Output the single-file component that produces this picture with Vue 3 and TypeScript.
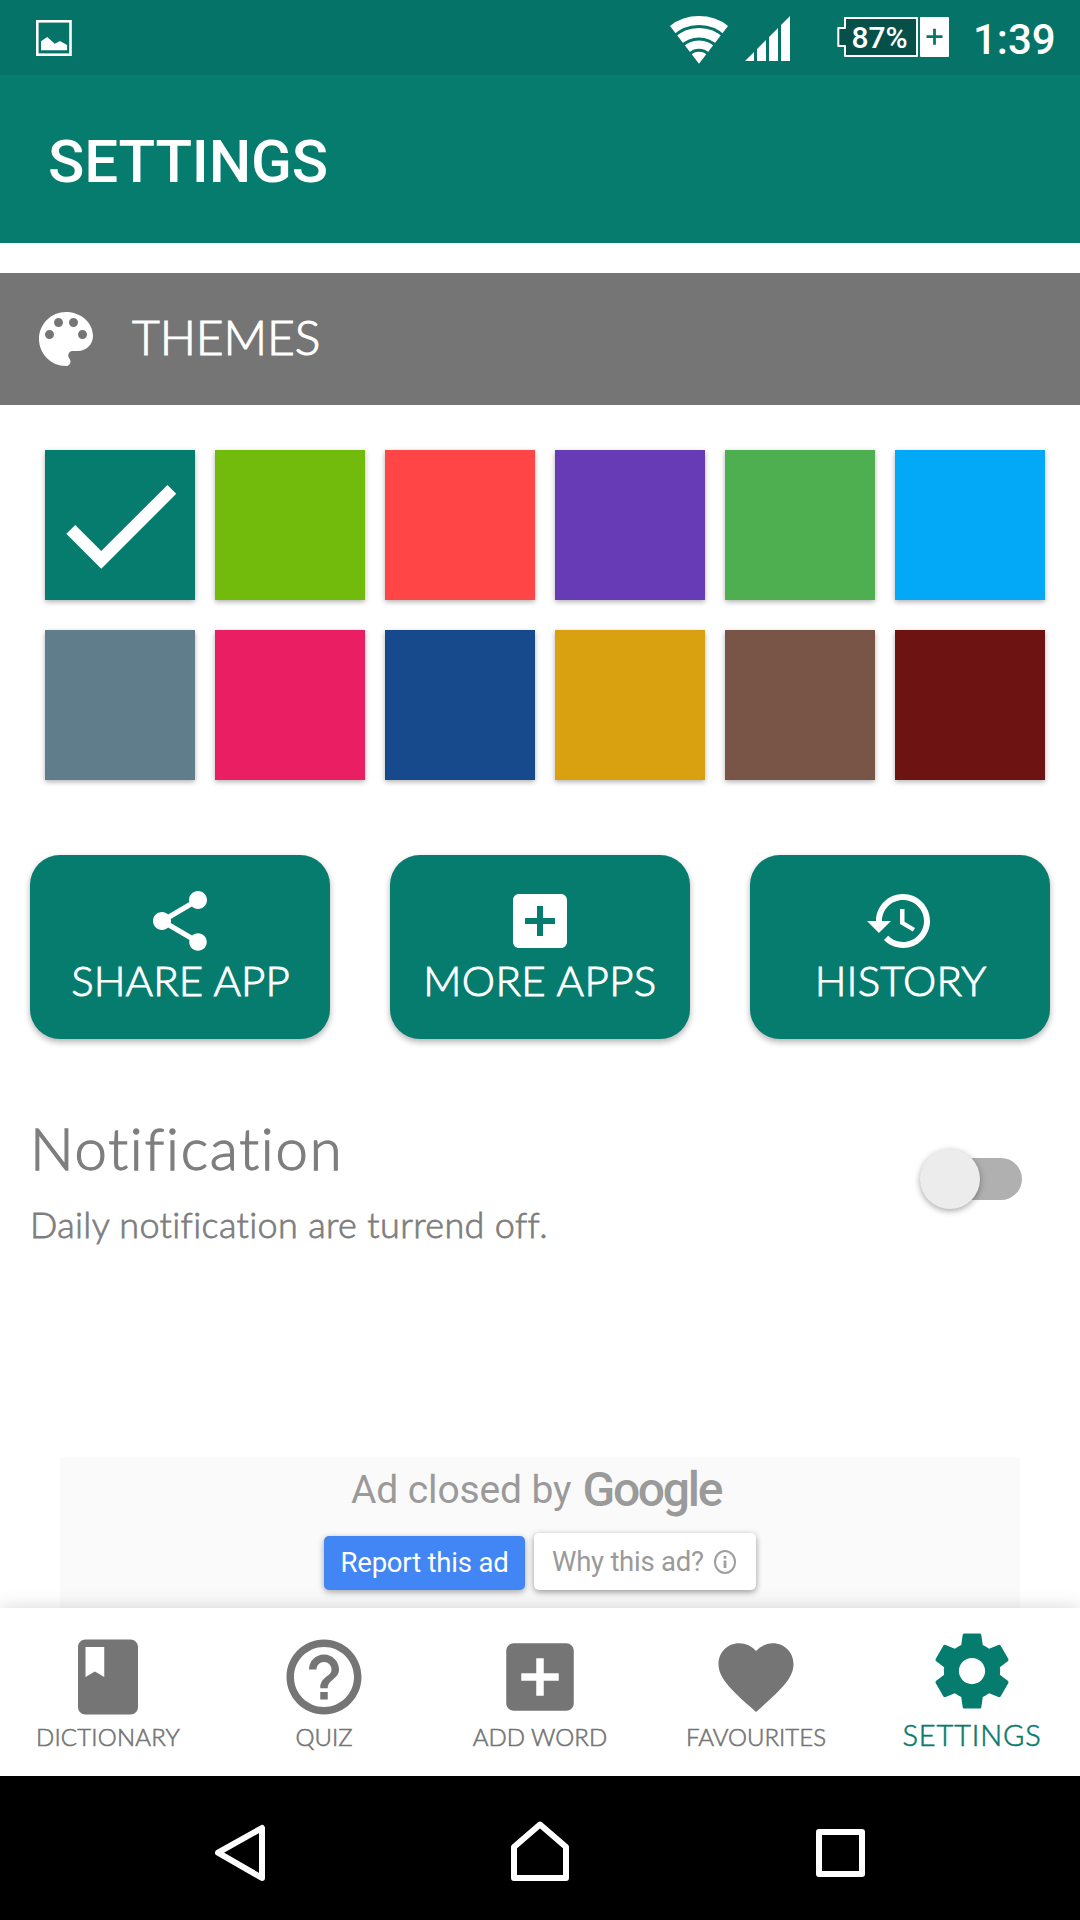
<script setup lang="ts">
import { ref } from 'vue'

interface Action { label: string; icon: string; cls: string }
interface Tab { label: string; icon: string; active?: boolean; cls: string }

const themes: string[] = [
  '#067c6f', '#72bb0c', '#ff4545', '#673bb5', '#4daf50', '#03a9f7',
  '#607d8b', '#ea1e63', '#174a8c', '#d9a010', '#795548', '#6d1412',
]
const selected = ref(0)
const notify = ref(false)

const plusBox = 'M19 3H5c-1.11 0-2 .9-2 2v14c0 1.1.89 2 2 2h14c1.1 0 2-.9 2-2V5c0-1.1-.9-2-2-2zm-2 10h-4v4h-2v-4H7v-2h4V7h2v4h4v2z'

const actions: Action[] = [
  { label: 'SHARE APP', cls: 'a-share', icon: 'M18 16.08c-.76 0-1.44.3-1.96.77L8.91 12.7c.05-.23.09-.46.09-.7s-.04-.47-.09-.7l7.05-4.11c.54.5 1.25.81 2.04.81 1.66 0 3-1.34 3-3s-1.34-3-3-3-3 1.34-3 3c0 .24.04.47.09.7L8.04 9.81C7.5 9.31 6.79 9 6 9c-1.66 0-3 1.34-3 3s1.34 3 3 3c.79 0 1.5-.31 2.04-.81l7.12 4.16c-.05.21-.08.43-.08.65 0 1.61 1.31 2.92 2.92 2.92s2.92-1.31 2.92-2.92-1.31-2.92-2.92-2.92z' },
  { label: 'MORE APPS', cls: 'a-more', icon: plusBox },
  { label: 'HISTORY', cls: 'a-history', icon: 'M13 3c-4.97 0-9 4.03-9 9H1l3.89 3.89.07.14L9 12H6c0-3.87 3.13-7 7-7s7 3.13 7 7-3.13 7-7 7c-1.93 0-3.68-.79-4.94-2.06l-1.42 1.42C8.27 19.99 10.51 21 13 21c4.97 0 9-4.03 9-9s-4.03-9-9-9zm-1 5v5l4.28 2.54.72-1.21-3.5-2.08V8H12z' },
]

const tabs: Tab[] = [
  { label: 'DICTIONARY', cls: 't-dictionary', icon: 'M18 2H6c-1.1 0-2 .9-2 2v16c0 1.1.9 2 2 2h12c1.1 0 2-.9 2-2V4c0-1.1-.9-2-2-2zM6 4h5v8l-2.5-1.5L6 12V4z' },
  { label: 'QUIZ', cls: 't-quiz', icon: 'M11 18h2v-2h-2v2zm1-16C6.48 2 2 6.48 2 12s4.48 10 10 10 10-4.48 10-10S17.52 2 12 2zm0 18c-4.41 0-8-3.59-8-8s3.59-8 8-8 8 3.59 8 8-3.59 8-8 8zm0-14c-2.21 0-4 1.79-4 4h2c0-1.1.9-2 2-2s2 .9 2 2c0 2-3 1.75-3 5h2c0-2.25 3-2.5 3-5 0-2.21-1.79-4-4-4z' },
  { label: 'ADD WORD', cls: 't-add', icon: plusBox },
  { label: 'FAVOURITES', cls: 't-favourites', icon: 'M12 21.35l-1.45-1.32C5.4 15.36 2 12.28 2 8.5 2 5.42 4.42 3 7.5 3c1.74 0 3.41.81 4.5 2.09C13.09 3.81 14.76 3 16.5 3 19.58 3 22 5.42 22 8.5c0 3.78-3.4 6.86-8.55 11.54L12 21.35z' },
  { label: 'SETTINGS', cls: 't-settings', active: true, icon: 'M19.43 12.98c.04-.32.07-.64.07-.98s-.03-.66-.07-.98l2.11-1.65c.19-.15.24-.42.12-.64l-2-3.46c-.12-.22-.39-.3-.61-.22l-2.49 1c-.52-.4-1.08-.73-1.69-.98l-.38-2.65C14.46 2.18 14.25 2 14 2h-4c-.25 0-.46.18-.49.42l-.38 2.65c-.61.25-1.17.59-1.69.98l-2.49-1c-.23-.09-.49 0-.61.22l-2 3.46c-.13.22-.07.49.12.64l2.11 1.65c-.04.32-.07.65-.07.98s.03.66.07.98l-2.11 1.65c-.19.15-.24.42-.12.64l2 3.46c.12.22.39.3.61.22l2.49-1c.52.4 1.08.73 1.69.98l.38 2.65c.03.24.24.42.49.42h4c.25 0 .46-.18.49-.42l.38-2.65c.61-.25 1.17-.59 1.69-.98l2.49 1c.23.09.49 0 .61-.22l2-3.46c.12-.22.07-.49-.12-.64l-2.11-1.65zM12 15.5c-1.93 0-3.5-1.57-3.5-3.5s1.57-3.5 3.5-3.5 3.5 1.57 3.5 3.5-1.57 3.5-3.5 3.5z' },
]
</script>

<template>
  <div class="screen">
    <header class="status">
      <svg class="pic" width="36" height="36" viewBox="0 0 36 36">
        <rect x="1.3" y="1.3" width="33.2" height="33.4" fill="none" stroke="#fff" stroke-width="2.6" />
        <path d="M5 21.3 11.2 17l7.6 6.7 5.1-2.7 7.2 4v5.3H5z" fill="#fff" />
      </svg>
      <svg class="wifi" width="58" height="48" viewBox="0 0 58 48">
        <clipPath id="wedge"><path d="M29 47.7 0 10V0h58v10z" /></clipPath>
        <g clip-path="url(#wedge)" fill="none" stroke="#fff">
          <circle cx="29" cy="47.7" r="43.1" stroke-width="9" />
          <circle cx="29" cy="47.7" r="31" stroke-width="9.4" />
          <circle cx="29" cy="47.7" r="19.1" stroke-width="8.4" />
          <circle cx="29" cy="47.7" r="11.9" fill="#fff" stroke="none" />
        </g>
      </svg>
      <svg class="signal" width="45" height="45" viewBox="0 0 45 45">
        <path d="M0 45h9v-9zM12 45V33l9-9v21zM24 45V21l9-9v33zM36 45V9l9-9v45z" fill="#fff" />
      </svg>
      <svg class="battery" width="112" height="42" viewBox="0 0 112 42">
        <path d="M8 2h72v38H8V30H1.3V12H8z" fill="#07504a" stroke="#fff" stroke-width="2" stroke-linejoin="round" />
        <rect x="83" y="1" width="29" height="40" rx="1" fill="#fff" />
        <path d="M89.5 20.7h16M97.5 12.700v16" stroke="#06756a" stroke-width="2.8" />
        <text class="pct" x="14.500" y="31.700" fill="#fff">87%</text>
      </svg>
      <span class="time">1:39</span>
    </header>

    <div class="toolbar"><h1>SETTINGS</h1></div>

    <main class="content">
      <div class="themes-head">
        <svg width="72" height="72" viewBox="0 0 24 24" fill="#fff">
          <path d="M12 3c-4.97 0-9 4.03-9 9s4.03 9 9 9c.83 0 1.500-.67 1.500-1.500 0-.39-.15-.74-.39-1.010-.23-.26-.38-.61-.38-.99 0-.83.67-1.500 1.500-1.500H16c2.760 0 5-2.240 5-5 0-4.420-4.030-8-9-8zm-5.500 9c-.83 0-1.500-.67-1.500-1.500S5.670 9 6.500 9 8 9.670 8 10.500 7.330 12 6.500 12zm3-4C8.670 8 8 7.330 8 6.500S8.670 5 9.500 5s1.500.67 1.500 1.500S10.330 8 9.500 8zm5 0c-.83 0-1.500-.67-1.500-1.500S13.670 5 14.500 5s1.500.67 1.500 1.500S15.330 8 14.500 8zm3 4c-.83 0-1.500-.67-1.500-1.500S16.670 9 17.500 9s1.500.67 1.500 1.500-.67 1.500-1.500 1.500z" />
        </svg>
        <h2 class="thin">THEMES</h2>
      </div>

      <div class="swatches">
        <button v-for="(color, i) in themes" :key="color" class="swatch" :style="{ background: color }" @click="selected = i">
          <svg v-if="i === selected" width="150" height="150" viewBox="0 0 24 24" fill="#fff">
            <path d="M9 16.170 4.830 12l-1.420 1.410L9 19 21 7l-1.410-1.410z" />
          </svg>
        </button>
      </div>

      <div class="actions">
        <button v-for="a in actions" :key="a.label" class="action">
          <svg width="72" height="72" viewBox="0 0 24 24" fill="#fff"><path :d="a.icon" /></svg>
          <span class="thin" :class="a.cls">{{ a.label }}</span>
        </button>
      </div>

      <div class="notify">
        <div>
          <div class="thin n-title">Notification</div>
          <div class="thin n-sub">Daily notification are turrend off.</div>
        </div>
        <button class="switch" :class="{ on: notify }" @click="notify = !notify"><span class="thumb"></span></button>
      </div>

      <div class="ad">
        <div class="ad-title"><span class="ad-by">Ad closed by</span><span class="google">Google</span></div>
        <div class="ad-buttons">
          <button class="report">Report this ad</button>
          <button class="why">
            <span>Why this ad?</span>
            <svg width="24" height="26" viewBox="0 0 24 26">
              <ellipse cx="12" cy="13" rx="10" ry="11" fill="none" stroke="#9e9e9e" stroke-width="2" />
              <path d="M12 11.500v7.500M12 7v2.800" stroke="#9e9e9e" stroke-width="2.8" />
            </svg>
          </button>
        </div>
      </div>
    </main>

    <nav class="tabs">
      <button v-for="t in tabs" :key="t.label" class="tab" :class="{ active: t.active }">
        <svg width="90" height="90" viewBox="0 0 24 24" fill="currentColor"><path :d="t.icon" /></svg>
        <span class="thin" :class="t.cls">{{ t.label }}</span>
      </button>
    </nav>

    <footer class="sysnav">
      <svg width="60" height="60" viewBox="0 0 60 60"><path d="M8 30.700 52 6v50z" /></svg>
      <svg width="60" height="62" viewBox="0 0 60 62"><path d="M4 27 30 4.500 56 27v31H4z" /></svg>
      <svg width="50" height="50" viewBox="0 0 50 50"><rect x="4" y="4" width="43" height="42" /></svg>
    </footer>
  </div>
</template>

<style>
body { margin: 0; background: #fff; }
</style>

<style scoped>
.screen { width: 1080px; height: 1920px; display: flex; flex-direction: column; overflow: hidden; background: #fff; font-family: Lato, 'Open Sans', sans-serif; font-weight: 300; font-variant-ligatures: none; }
button { border: 0; padding: 0; margin: 0; background: none; font: inherit; color: inherit; white-space: nowrap; }
h1, h2 { margin: 0; font-weight: 300; }
svg { display: block; flex: none; }
span, h1, h2 { white-space: nowrap; }
.thin { -webkit-text-stroke: 0.022em currentColor; }

.status { height: 75px; flex: none; display: flex; align-items: flex-start; background: #067368; color: #fff; font-family: Roboto, sans-serif; }
.pic { margin: 20px 0 0 36px; }
.wifi { margin: 16px 0 0 598px; }
.signal { margin: 16px 0 0 17px; }
.battery { margin: 16px 0 0 47px; }
.pct { font: 500 30px Roboto, sans-serif; }
.time { margin: 15px 0 0 24px; font-size: 42px; line-height: 50px; font-weight: 500; }

.toolbar { height: 168px; flex: none; display: flex; align-items: center; box-sizing: border-box; padding: 6px 0 0 48px; background: #067c6f; color: #fff; }
h1 { font: 500 60px/70px Roboto, sans-serif; letter-spacing: -0.15px; }

.content { height: 1365px; flex: none; display: flex; flex-direction: column; box-sizing: border-box; padding-top: 30px; }
.themes-head { height: 132px; flex: none; display: flex; align-items: center; gap: 30px; padding-left: 30px; background: #757575; color: #fff; }
h2 { font-size: 48px; line-height: 58px; padding-bottom: 5px; letter-spacing: -0.1px; }

.swatches { display: grid; grid-template-columns: repeat(6, 150px); gap: 30px 20px; margin: 45px 0 0 45px; }
.swatch { height: 150px; box-shadow: 0 2px 5px rgba(0, 0, 0, .3); }

.actions { display: flex; gap: 60px; margin: 75px 0 0 30px; }
.action { width: 300px; height: 184px; border-radius: 30px; box-sizing: border-box; padding-top: 30px; display: flex; flex-direction: column; align-items: center; background: #067c6f; color: #fff; box-shadow: 0 3px 6px rgba(0, 0, 0, .3); font-size: 42px; line-height: 46px; }
.a-share { letter-spacing: 0.12px; padding-left: 1px; }
.a-more { letter-spacing: 0.4px; }
.a-history { letter-spacing: 0.15px; padding-left: 1px; }

.notify { display: flex; justify-content: space-between; margin: 77px 58px 0 30px; color: #7e7e7e; }
.n-title { font-size: 58px; line-height: 64px; letter-spacing: 1.75px; }
.n-sub { font-size: 36px; line-height: 44px; margin-top: 22px; letter-spacing: 0.35px; }
.switch { display: block; width: 84px; height: 42px; margin-top: 42px; border-radius: 21px; background: #b0b0b0; }
.thumb { display: block; width: 60px; height: 60px; margin: -9px 0 0 -18px; border-radius: 50%; background: #ececec; box-shadow: 0 2px 6px rgba(0, 0, 0, .35); }
.switch.on .thumb { margin-left: 42px; }

.ad { width: 960px; height: 151px; margin: auto auto 0; background: #fafafa; color: #9a9a9a; font-family: Roboto, sans-serif; font-weight: 400; }
.ad-title { display: flex; align-items: flex-start; height: 76px; padding-left: 291px; }
.ad-by { font-size: 39px; line-height: 66px; letter-spacing: -0.12px; }
.google { font: 500 48px/66px Roboto, sans-serif; letter-spacing: -2.25px; margin-left: 11px; }
.ad-buttons { display: flex; align-items: flex-end; gap: 9px; padding-left: 264px; font-size: 27.5px; }
.report { width: 201px; height: 54px; border-radius: 5px; padding-bottom: 2px; letter-spacing: -0.2px; background: #4285f4; color: #fff; box-shadow: 0 2px 6px rgba(0, 0, 0, .35); }
.why { width: 222px; height: 57px; border-radius: 5px; display: flex; align-items: center; gap: 9px; box-sizing: border-box; padding-left: 18px; letter-spacing: -0.25px; background: #fff; box-shadow: 0 2px 6px rgba(0, 0, 0, .4); }

.tabs { position: relative; height: 168px; flex: none; display: flex; background: #fff; color: #757575; box-shadow: 0 0 18px rgba(0, 0, 0, .16); }
.tab { width: 216px; box-sizing: border-box; padding-top: 24px; display: flex; flex-direction: column; align-items: center; font-size: 24px; line-height: 30px; }
.tab .thin { -webkit-text-stroke-width: 0.6px; }
.tab.active { padding-top: 18px; color: #067c6f; font-size: 29px; line-height: 38px; }
.t-dictionary { letter-spacing: 0.2px; }
.t-settings { letter-spacing: 0.85px; }

.sysnav { position: relative; flex: 1; display: flex; align-items: flex-start; background: #000; }
.sysnav svg { fill: none; stroke: #fff; stroke-width: 6; stroke-linejoin: round; }
.sysnav svg:nth-child(1) { margin: 46px 0 0 210px; }
.sysnav svg:nth-child(2) { margin: 44px 0 0 240px; }
.sysnav svg:nth-child(3) { margin: 52px 0 0 245px; }
</style>
